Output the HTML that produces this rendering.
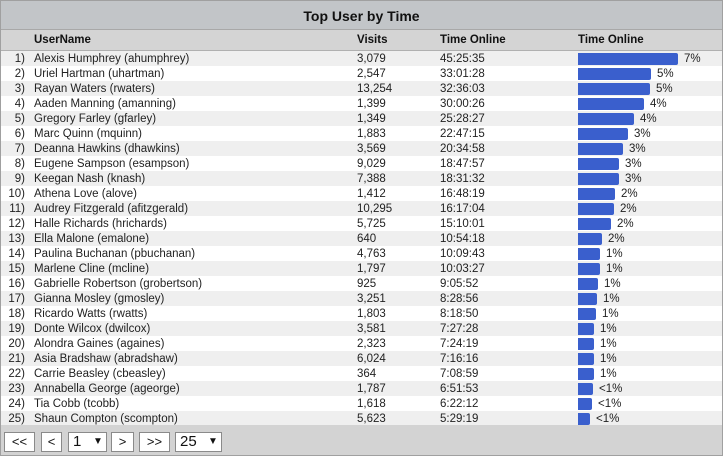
<!DOCTYPE html>
<html><head><style>
body{margin:0;width:723px;height:456px;overflow:hidden;font-family:"Liberation Sans",Arial,sans-serif;font-size:11.5px;color:#222;background:#fff}
#w{position:absolute;left:0;top:0;width:721px;height:454px;border:1px solid #a0a0a0;background:#fff}
#t{position:absolute;left:0;top:0;width:721px;height:28px;background:#c2c5c8;border-bottom:1px solid #a8a8a8;text-align:center;font-weight:bold;font-size:14px;line-height:30px;color:#111}
#h{position:absolute;left:0;top:29px;width:721px;height:20px;background:#d4d4d4;border-bottom:1px solid #b0b0b0;font-weight:bold;line-height:21px;color:#111}
.r{position:absolute;left:0;width:721px;height:15px;line-height:16px}
.r.o{background:#efefef}
.c{position:absolute;top:0;white-space:nowrap}
.n{right:697px;text-align:right}
.b{position:absolute;left:577px;top:2px;height:12px;background:#3a5fcd;border-radius:0 2px 2px 0}
#f{position:absolute;left:0;top:424px;width:721px;height:30px;background:#d3d3d3}
.btn{position:absolute;top:7px;height:20px;border:1px solid #8a8a8a;background:#fff;box-sizing:border-box;font-size:13px;line-height:18px;text-align:center;color:#111}
</style></head><body><div id="w">
<div id="t">Top User by Time</div>
<div id="h"><span class="c" style="left:33px">UserName</span><span class="c" style="left:356px">Visits</span><span class="c" style="left:439px">Time Online</span><span class="c" style="left:577px">Time Online</span></div>
<div id="rows"></div>
<div id="f">
<div class="btn" style="left:3px;width:31px">&lt;&lt;</div>
<div class="btn" style="left:40px;width:21px">&lt;</div>
<div class="btn" style="left:67px;width:39px;text-align:left;padding-left:4px;font-size:15px">1<span style="position:absolute;left:24px;font-size:10px">▼</span></div>
<div class="btn" style="left:110px;width:23px">&gt;</div>
<div class="btn" style="left:138px;width:31px">&gt;&gt;</div>
<div class="btn" style="left:174px;width:47px;text-align:left;padding-left:4px;font-size:15px">25<span style="position:absolute;left:32px;font-size:10px">▼</span></div>
</div>
</div>
<script>
var d=[["Alexis Humphrey (ahumphrey)","3,079","45:25:35","7%"],["Uriel Hartman (uhartman)","2,547","33:01:28","5%"],["Rayan Waters (rwaters)","13,254","32:36:03","5%"],["Aaden Manning (amanning)","1,399","30:00:26","4%"],["Gregory Farley (gfarley)","1,349","25:28:27","4%"],["Marc Quinn (mquinn)","1,883","22:47:15","3%"],["Deanna Hawkins (dhawkins)","3,569","20:34:58","3%"],["Eugene Sampson (esampson)","9,029","18:47:57","3%"],["Keegan Nash (knash)","7,388","18:31:32","3%"],["Athena Love (alove)","1,412","16:48:19","2%"],["Audrey Fitzgerald (afitzgerald)","10,295","16:17:04","2%"],["Halle Richards (hrichards)","5,725","15:10:01","2%"],["Ella Malone (emalone)","640","10:54:18","2%"],["Paulina Buchanan (pbuchanan)","4,763","10:09:43","1%"],["Marlene Cline (mcline)","1,797","10:03:27","1%"],["Gabrielle Robertson (grobertson)","925","9:05:52","1%"],["Gianna Mosley (gmosley)","3,251","8:28:56","1%"],["Ricardo Watts (rwatts)","1,803","8:18:50","1%"],["Donte Wilcox (dwilcox)","3,581","7:27:28","1%"],["Alondra Gaines (againes)","2,323","7:24:19","1%"],["Asia Bradshaw (abradshaw)","6,024","7:16:16","1%"],["Carrie Beasley (cbeasley)","364","7:08:59","1%"],["Annabella George (ageorge)","1,787","6:51:53","<1%"],["Tia Cobb (tcobb)","1,618","6:22:12","<1%"],["Shaun Compton (scompton)","5,623","5:29:19","<1%"]];
var h="";d.forEach(function(r,i){var p=r[2].split(":");var s=+p[0]*3600+ +p[1]*60+ +p[2];var w=Math.round(s/163535*100);
h+='<div class="r'+(i%2==0?' o':'')+'" style="top:'+(50+i*15)+'px"><span class="c n">'+(i+1)+')</span><span class="c" style="left:33px">'+r[0]+'</span><span class="c" style="left:356px">'+r[1]+'</span><span class="c" style="left:439px">'+r[2]+'</span><div class="b" style="width:'+w+'px"></div><span class="c" style="left:'+(577+w+6)+'px">'+r[3].replace("<","&lt;")+'</span></div>';});
document.getElementById("rows").innerHTML=h;
</script>
</body></html>
